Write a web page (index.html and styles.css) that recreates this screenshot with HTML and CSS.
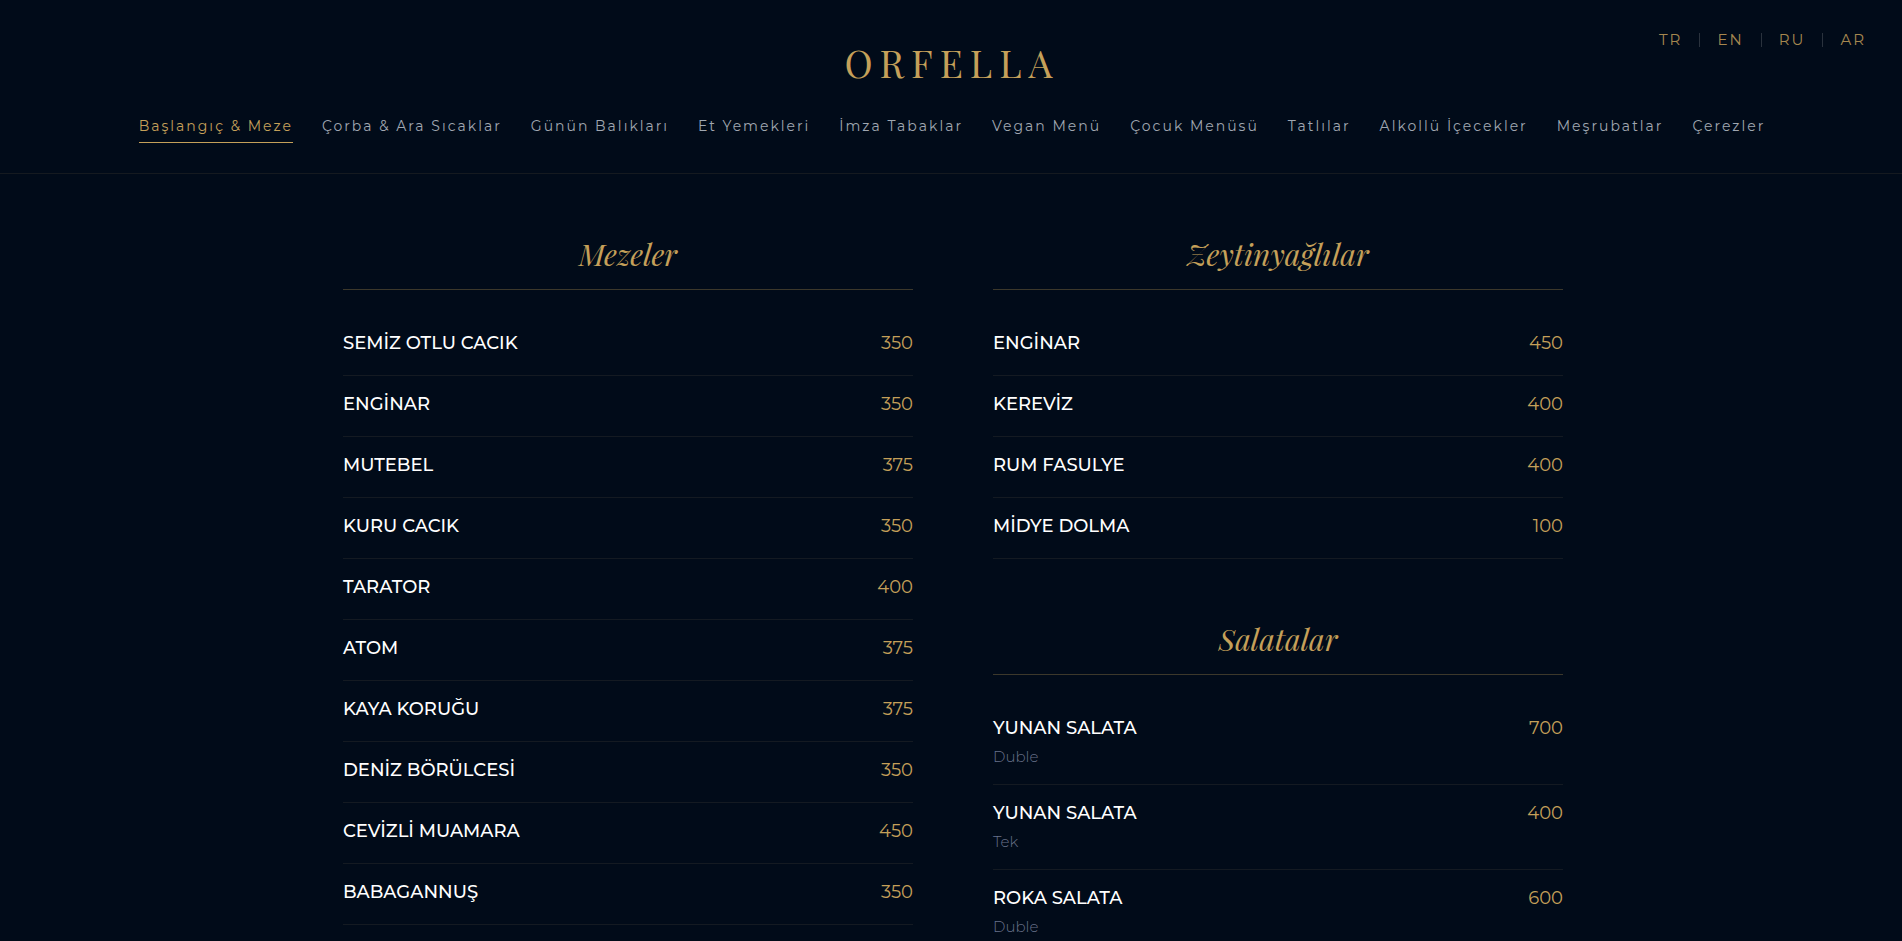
FILE: index.html
```
<!DOCTYPE html>
<html lang="tr">
<head>
<meta charset="utf-8">
<meta name="viewport" content="width=device-width, initial-scale=1">
<title>Orfella</title>
<link rel="stylesheet" href="styles.css">
</head>
<body>
<header class="header">
  <div class="languages">
    <a class="language" href="#tr">TR</a>
    <a class="language" href="#en">EN</a>
    <a class="language" href="#ru">RU</a>
    <a class="language" href="#ar">AR</a>
  </div>
  <h1 class="logo">ORFELLA</h1>
  <nav class="nav">
    <a class="nav-link active" href="#baslangic">Başlangıç &amp; Meze</a>
    <a class="nav-link" href="#corba">Çorba &amp; Ara Sıcaklar</a>
    <a class="nav-link" href="#balik">Günün Balıkları</a>
    <a class="nav-link" href="#et">Et Yemekleri</a>
    <a class="nav-link" href="#imza">İmza Tabaklar</a>
    <a class="nav-link" href="#vegan">Vegan Menü</a>
    <a class="nav-link" href="#cocuk">Çocuk Menüsü</a>
    <a class="nav-link" href="#tatli">Tatlılar</a>
    <a class="nav-link" href="#alkollu">Alkollü İçecekler</a>
    <a class="nav-link" href="#mesrubat">Meşrubatlar</a>
    <a class="nav-link" href="#cerez">Çerezler</a>
  </nav>
</header>
<main class="menu">
  <div class="column">
    <section class="section">
      <h2 class="section-title">Mezeler</h2>
      <ul class="items">
        <li class="item"><span class="name">SEMİZ OTLU CACIK</span><span class="price">350</span></li>
        <li class="item"><span class="name">ENGİNAR</span><span class="price">350</span></li>
        <li class="item"><span class="name">MUTEBEL</span><span class="price">375</span></li>
        <li class="item"><span class="name">KURU CACIK</span><span class="price">350</span></li>
        <li class="item"><span class="name">TARATOR</span><span class="price">400</span></li>
        <li class="item"><span class="name">ATOM</span><span class="price">375</span></li>
        <li class="item"><span class="name">KAYA KORUĞU</span><span class="price">375</span></li>
        <li class="item"><span class="name">DENİZ BÖRÜLCESİ</span><span class="price">350</span></li>
        <li class="item"><span class="name">CEVİZLİ MUAMARA</span><span class="price">450</span></li>
        <li class="item"><span class="name">BABAGANNUŞ</span><span class="price">350</span></li>
      </ul>
    </section>
  </div>
  <div class="column">
    <section class="section">
      <h2 class="section-title">Zeytinyağlılar</h2>
      <ul class="items">
        <li class="item"><span class="name">ENGİNAR</span><span class="price">450</span></li>
        <li class="item"><span class="name">KEREVİZ</span><span class="price">400</span></li>
        <li class="item"><span class="name">RUM FASULYE</span><span class="price">400</span></li>
        <li class="item"><span class="name">MİDYE DOLMA</span><span class="price">100</span></li>
      </ul>
    </section>
    <section class="section">
      <h2 class="section-title">Salatalar</h2>
      <ul class="items">
        <li class="item"><span class="name">YUNAN SALATA</span><span class="price">700</span><span class="portion">Duble</span></li>
        <li class="item"><span class="name">YUNAN SALATA</span><span class="price">400</span><span class="portion">Tek</span></li>
        <li class="item"><span class="name">ROKA SALATA</span><span class="price">600</span><span class="portion">Duble</span></li>
      </ul>
    </section>
  </div>
</main>
</body>
</html>
```

FILE: styles.css
```
:root {
  --bg: #010b19;
  --gold: #c5a059;
  --sans: Montserrat, Inter, "Liberation Sans", sans-serif;
  --serif: "Playfair Display", "Liberation Serif", serif;
}

* {
  box-sizing: border-box;
}

html {
  background: var(--bg);
}

body {
  margin: 0;
  height: 100vh;
  overflow: hidden;
  background: var(--bg);
  color: #fff;
  font-family: var(--sans);
}

a {
  color: inherit;
  text-decoration: none;
}

.header {
  position: relative;
  display: flex;
  flex-direction: column;
  align-items: center;
  padding: 37px 18px 30px 20px;
  border-bottom: 1px solid #151a20;
}

.languages {
  position: absolute;
  top: 33px;
  right: 19px;
  display: flex;
  color: #a5874f;
  font-size: 15px;
  line-height: 14px;
  letter-spacing: 2px;
}

.language {
  padding: 0 17px;
}

.language + .language {
  border-left: 1px solid #2a323d;
}

.logo {
  margin: 0;
  color: var(--gold);
  font-family: var(--serif);
  font-size: 38px;
  font-weight: 400;
  line-height: 52px;
  letter-spacing: 7px;
}

.nav {
  display: flex;
  justify-content: center;
  gap: 29px;
  margin-top: 27px;
  color: #a0a7b1;
  font-size: 14px;
  font-weight: 400;
  line-height: 20px;
  letter-spacing: 2px;
  white-space: nowrap;
}

.nav-link {
  padding-bottom: 6px;
  border-bottom: 1px solid transparent;
}

.active {
  color: var(--gold);
  border-color: var(--gold);
}

.menu {
  display: grid;
  grid-template-columns: 1fr 1fr;
  gap: 80px;
  max-width: 1300px;
  margin: 0 auto;
  padding: 60px 38px 60px 42px;
}

.column {
  display: flex;
  flex-direction: column;
  gap: 60px;
}

.section-title {
  margin: 0 0 25px;
  padding-bottom: 15px;
  border-bottom: 1px solid #3c382b;
  color: var(--gold);
  font-family: var(--serif);
  font-size: 30px;
  font-style: italic;
  font-weight: 400;
  line-height: 40px;
  text-align: center;
}

.items {
  margin: 0;
  padding: 0;
  list-style: none;
}

.item {
  display: grid;
  grid-template-columns: 1fr auto;
  padding: 16px 0 20px;
  border-bottom: 1px solid #141a22;
  font-size: 18px;
  line-height: 24px;
}

.name {
  font-weight: 500;
}

.price {
  color: var(--gold);
}

.portion {
  margin-top: 10px;
  color: #69728a;
  font-size: 15px;
  font-weight: 300;
  line-height: 14px;
}
```
